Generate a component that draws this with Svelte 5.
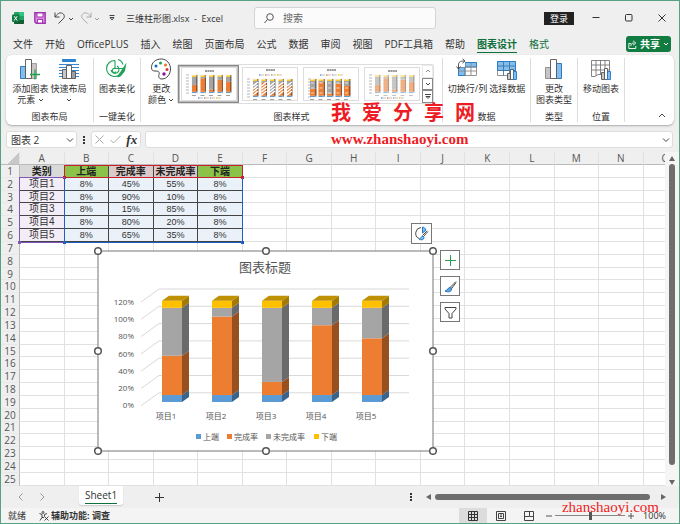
<script>
	const tabs = ['文件', '开始', 'OfficePLUS', '插入', '绘图', '页面布局', '公式', '数据', '审阅', '视图', 'PDF工具箱', '帮助', '图表设计', '格式'];
	const columns = 'ABCDEFGHIJKLMNO'.split('');
	const header = ['类别', '上端', '完成率', '未完成率', '下端'];
	const items = [
		{ name: '项目1', values: [8, 45, 55, 8] },
		{ name: '项目2', values: [8, 90, 10, 8] },
		{ name: '项目3', values: [8, 15, 85, 8] },
		{ name: '项目4', values: [8, 80, 20, 8] },
		{ name: '项目5', values: [8, 65, 35, 8] }
	];
	const rows = Array.from({ length: 25 }, (_, i) => i + 1);

	// front and side colour of every series
	const series = [
		{ front: '#5b9bd5', side: '#3a6489', x: 97 },
		{ front: '#ed7d31', side: '#98501f', x: 128 },
		{ front: '#a5a5a5', side: '#6a6a6a', x: 167 },
		{ front: '#ffc000', side: '#a47b00', x: 215 }
	];
	const handles = [[4, 4], [172, 4], [339, 4], [4, 104], [339, 104], [4, 204], [172, 204], [339, 204]];
	const styles = [
		{ title: 5, top: 8, legend: 31 },
		{ title: 4, top: 12, legend: 8, hatch: true },
		{ title: 4, top: 12, legend: 8, wide: true },
		{ title: 5, top: 8, legend: 31, pale: true }
	];

	let activeTab = '图表设计';
	let activeStyle = 0;
	let nameBox = '图表 2';
	let formula = '';
	let zoom = 50;

	function cell(row, col) {
		if (row === 1) return header[col] ?? '';
		const item = items[row - 2];
		if (!item || col > 4) return '';
		return col === 0 ? item.name : item.values[col - 1] + '%';
	}

	function stack(values, scale) {
		let sum = 0;
		return values.map((v, i) => {
			sum += v;
			return { ...series[i], h: v * scale, y: -sum * scale };
		});
	}
</script>

{#snippet chevron()}
	<svg class="chevron" viewBox="0 0 6 6" width="6" height="6"><path d="M1 2l2 2 2-2" /></svg>
{/snippet}

<div class="app">
	<header class="titlebar">
		<div class="quick">
			<svg width="12" height="12" viewBox="0 0 12 12">
				<rect x="2" width="10" height="12" rx="1" fill="#21a366" />
				<path d="M7 0h4a1 1 0 0 1 1 1v3H7z" fill="#33c481" />
				<path d="M2 8h10v3a1 1 0 0 1-1 1H3a1 1 0 0 1-1-1z" fill="#185c37" />
				<rect y="2.5" width="7.5" height="7.5" rx="1" fill="#107c41" />
				<path d="M2.2 4.2l3 4.2M5.2 4.2l-3 4.2" stroke="#fff" />
			</svg>
			<button class="save" aria-label="保存">
				<svg width="12" height="12" viewBox="0 0 12 12">
					<path d="M.8.8h10.4v10.4H2.2L.8 9.8z" fill="#d88be0" stroke="#a335b0" stroke-width="1.4" />
					<path d="M3 1h6v4H3zM3.5 7.5h5V11h-5z" fill="#fff" stroke="#a335b0" />
				</svg>
			</button>
			<button class="undo" aria-label="撤消">
				<svg width="12" height="12" viewBox="0 0 12 12" fill="none" stroke="#444">
					<path d="M1 .5v4.5h4.500M1 5C3.500 1.500 5.500.5 7.500 1c3 .8 3.600 4 1.800 5.800L4.500 11.500" />
				</svg>
			</button>
			<button class="more" aria-label="撤消列表">{@render chevron()}</button>
			<button class="redo" aria-label="恢复">
				<svg width="12" height="12" viewBox="0 0 12 12" fill="none" stroke="#aaa">
					<path d="M11 .5v4.500H6.500M11 5C8.500 1.500 6.500.5 4.500 1c-3 .8-3.600 4-1.800 5.800L7.500 11.500" />
				</svg>
			</button>
			<button class="more dim" aria-label="恢复列表">{@render chevron()}</button>
			<button class="custom" aria-label="自定义快速访问工具栏">
				<svg width="6" height="6" viewBox="0 0 6 6" fill="none" stroke="#444"><path d="M.5.5h5M1 2.500h4L3 5z" /></svg>
			</button>
			<h1>三维柱形图.xlsx&nbsp; -&nbsp; Excel</h1>
		</div>
		<label class="search">
			<svg width="10" height="11" viewBox="0 0 10 11" fill="none" stroke="#555">
				<circle cx="6" cy="4" r="3.300" /><path d="M3.600 6.400L.5 10" />
			</svg>
			<input type="text" placeholder="搜索" aria-label="搜索" />
		</label>
		<div class="window">
			<button class="login">登录</button>
			<button aria-label="最小化"><svg width="8" height="8" viewBox="0 0 8 8" stroke="#333"><path d="M.5 3.500h7" /></svg></button>
			<button aria-label="最大化"><svg width="8" height="8" viewBox="0 0 8 8" fill="none" stroke="#333"><rect x=".5" y=".5" width="6.500" height="6.500" rx="1" /></svg></button>
			<button aria-label="关闭"><svg width="8" height="8" viewBox="0 0 8 8" stroke="#333"><path d="M.5.5l7 7M7.500.5l-7 7" /></svg></button>
		</div>
	</header>

	<nav class="tabs">
		{#each tabs as tab}
			<button class:active={tab === activeTab} class:context={tab === '格式'} on:click={() => (activeTab = tab)}>{tab}</button>
		{/each}
		<button class="share">
			<svg width="9" height="9" viewBox="0 0 9 9" fill="none" stroke="#fff" stroke-width=".9">
				<path d="M3 3.500H.8v5h7V6M2.800 6c.2-2 1.200-3 3.200-3M5 .8L7.800 3 5 5.200" />
			</svg>
			共享 {@render chevron()}
		</button>
	</nav>

	<section class="ribbon">
		<div class="group layout">
			<div class="tools">
				<button>
					<svg width="22" height="22" viewBox="0 0 22 22" stroke="#555" stroke-width=".9">
						<path d="M1.500 8.500h5v12h-5z" fill="#83beec" stroke="#1e6fb8" />
						<path d="M12.500 5.500h5v15h-5z" fill="#c8c6c4" stroke="#999" />
						<path d="M6.500 1.500h6v19h-6z" fill="#fff" />
						<path d="M16 11.500v10M11 16.500h10" stroke="#22a04b" stroke-width="1.300" />
					</svg>
					<span>添加图表<br />元素 {@render chevron()}</span>
				</button>
				<button>
					<svg width="22" height="22" viewBox="0 0 22 22" stroke="#1e78c8" stroke-width=".9">
						<path d="M4.500 1.500h13v2h-13z" fill="#2b88d8" />
						<path d="M1 6.500h20M1 9.500h20M1 12.500h20M1 15.500h20M1 18.500h20" />
						<path d="M4.500 11.500h4v9h-4z" fill="#c8c6c4" stroke="#555" />
						<path d="M8.500 7.500h5v13h-5z" fill="#fff" stroke="#555" />
						<path d="M13.500 13.500h4v7h-4z" fill="#a19f9d" stroke="#555" />
					</svg>
					<span>快速布局<br />{@render chevron()}</span>
				</button>
			</div>
			<h2>图表布局</h2>
		</div>
		<div class="group narrow">
			<div class="tools">
				<button>
					<svg width="22" height="22" viewBox="0 0 22 22" fill="none" stroke="#1fa35a" stroke-width="1.100">
						<path d="M9 2.500a8 8 0 1 0 7.500 9M9 2.500v8h8M5 12a4 4 0 1 0 6-4M9 10.500a2 2 0 1 0 1 3M12 1.500a7 7 0 0 1 5 5" />
						<path d="M20.500 4.500L19 13l-3.500 4.500c-1.500 2-4 2-5 1 2.500-.5 2-3 3.500-4z" fill="#1fa35a" stroke="none" />
					</svg>
					<span>图表美化</span>
				</button>
			</div>
			<h2>一键美化</h2>
		</div>
		<div class="group wide">
			<div class="tools">
				<button class="colors">
					<svg width="22" height="22" viewBox="0 0 22 22">
						<path d="M11.500 1C5 1 1.500 5 1.500 9.500c0 3 1.500 3.500 3.500 3.500 3 0 5 .5 4 3.500-.8 2.500 0 4.500 3 4.500 5 0 8.500-5 8.500-10S17 1 11.500 1z" fill="#fff" stroke="#444" />
						<circle cx="6" cy="8" r="1.500" fill="#0f6cbd" /><circle cx="10.500" cy="5" r="1.500" fill="#16a34a" />
						<circle cx="15.500" cy="7" r="1.500" fill="#f2711c" /><circle cx="17" cy="11.500" r="1.500" fill="#d13438" />
						<circle cx="14" cy="16" r="1.700" fill="#881798" />
					</svg>
					<span>更改<br />颜色 {@render chevron()}</span>
				</button>
				<div class="gallery">
					{#each styles as s, n}
						<button class="thumb" class:picked={n === activeStyle} aria-label={'样式 ' + (n + 1)} on:click={() => (activeStyle = n)}>
							<svg width="56" height="34" viewBox="0 0 56 34">
								<rect x=".5" y=".5" width="55" height="33" fill="#fff" stroke="#ddd" />
								<path d="M24 {s.title - 1}h9" stroke="#777" stroke-dasharray="2 .4" stroke-width="1.500" />
								{#each [0, 1, 2, 3, 4, 5, 6] as g}
									<path d="M10 {s.top + g * 3}h39" stroke="#e4e4e4" stroke-width=".5" />
									<path d="M5 {s.top + g * 3}h3" stroke="#999" stroke-width=".7" />
								{/each}
								{#each items as item, i}
									<g transform="translate({s.wide ? 7 + i * 8.500 : 11 + i * 8.500} {s.top + 18})" opacity={s.pale ? 0.6 : 1}>
										{#each stack(item.values, 0.15) as b}
											<rect y={b.y} width={s.wide ? 5 : 4} height={b.h} fill={b.front} />
											<rect x={s.wide ? 5 : 4} y={b.y - 0.5} width="1.500" height={b.h} fill={b.side} />
										{/each}
										{#if s.hatch}
											<path d="M0-2l5-4M0-5l5-4M0-8l5-4M0-11l5-4" stroke="#fff" stroke-width="1.500" />
										{/if}
										{#if s.wide}
											<path d="M1-4h3M1-9h3M1-14h3" stroke="#fff" stroke-width=".7" />
										{/if}
										<path d="M0 2.500h4" stroke="#888" stroke-width=".8" />
									</g>
								{/each}
								{#each series as part, i}
									<path d="M{17 + i * 6} {s.legend}h1.500" stroke={part.front} stroke-width="1.500" />
									<path d="M{19 + i * 6} {s.legend}h3" stroke="#aaa" stroke-width=".7" />
								{/each}
							</svg>
						</button>
					{/each}
					<div class="pager">
						<button class="off" aria-label="上一行"><svg class="chevron" viewBox="0 0 6 6" width="6" height="6"><path d="M1 4l2-2 2 2" /></svg></button>
						<button aria-label="下一行">{@render chevron()}</button>
						<button aria-label="其他"><svg class="chevron" viewBox="0 0 6 6" width="6" height="6"><path d="M0 .5h6M1 2.500l2 2 2-2z" /></svg></button>
					</div>
				</div>
			</div>
			<h2>图表样式</h2>
		</div>
		<div class="group data">
			<div class="tools">
				<button>
					<svg width="22" height="22" viewBox="0 0 22 22" fill="none" stroke="#444" stroke-width=".9">
						<path d="M2.500 4.500h18v13h-18z" fill="#fff" stroke="#888" />
						<path d="M9 4.500h11.500v4.500H9zM2.500 9H9v8.500H2.500z" fill="#83beec" stroke="#1e78c8" />
						<path d="M9 4.500v13M15 4.500v13M2.500 9h18M2.500 13h18" stroke="#888" />
						<path d="M0 0h9v9H0z" fill="#fff" stroke="none" />
						<path d="M2.500 10.500V7c0-3 1.500-4 6-4M.5 8.500l2 2.500 2-2.500M6.500.8L9 3 6.500 5.200" />
					</svg>
					<span>切换行/列</span>
				</button>
				<button>
					<svg width="22" height="22" viewBox="0 0 22 22" stroke="#888" stroke-width=".9">
						<path d="M1.500 3.500h18v14h-18z" fill="#fff" />
						<path d="M1.500 3.500h18v9h-18z" fill="#83beec" stroke="#1e78c8" />
						<path d="M7.500 3.500v14M13.500 3.500v14M1.500 8h18M1.500 12.500h18" stroke="#3c77a8" />
						<path d="M11.500 15.500h3v6h-3z" fill="#c8c6c4" stroke="#555" />
						<path d="M14.500 11.500h3v10h-3z" fill="#fff" stroke="#555" />
						<path d="M17.500 13.500h3v8h-3z" fill="#83beec" stroke="#1e78c8" />
					</svg>
					<span>选择数据</span>
				</button>
			</div>
			<h2>数据</h2>
		</div>
		<div class="group narrow">
			<div class="tools">
				<button>
					<svg width="22" height="22" viewBox="0 0 22 22" stroke="#555" stroke-width=".9">
						<path d="M2.500 9.500h5v11h-5z" fill="#c8c6c4" stroke="#888" />
						<path d="M13.500 5.500h5v15h-5z" fill="#83beec" stroke="#1e6fb8" />
						<path d="M7.500 1.500h6v19h-6z" fill="#fff" />
					</svg>
					<span>更改<br />图表类型</span>
				</button>
			</div>
			<h2>类型</h2>
		</div>
		<div class="group narrow">
			<div class="tools">
				<button>
					<svg width="22" height="22" viewBox="0 0 22 22" stroke="#777" stroke-width=".9">
						<path d="M1.500 2.500h18v14H8L5 18.500H1.500z" fill="#fff" />
						<path d="M6 2.500v15M10.500 2.500v14M15 2.500v14M1.500 7h18M1.500 12h18" />
						<path d="M11.500 14.500h3v7h-3z" fill="#c8c6c4" stroke="#555" />
						<path d="M14.500 10.500h3v11h-3z" fill="#fff" stroke="#555" />
						<path d="M17.500 13.500h3v8h-3z" fill="#83beec" stroke="#1e78c8" />
					</svg>
					<span>移动图表</span>
				</button>
			</div>
			<h2>位置</h2>
		</div>
		<button class="collapse" aria-label="折叠功能区"><svg class="chevron" viewBox="0 0 8 6" width="8" height="6"><path d="M1 5l3-3 3 3" /></svg></button>
	</section>

	<div class="formula">
		<div class="box name">
			<input type="text" aria-label="名称框" bind:value={nameBox} />
			<button aria-label="名称列表"><svg class="chevron" viewBox="0 0 8 6" width="8" height="6"><path d="M1 1.500l3 3 3-3" /></svg></button>
		</div>
		<svg class="dots" width="2" height="8" viewBox="0 0 2 8" fill="#333"><path d="M0 0h2v2H0zM0 3h2v2H0zM0 6h2v2H0z" /></svg>
		<div class="box actions">
			<button aria-label="取消"><svg width="9" height="9" viewBox="0 0 9 9" stroke="#aaa"><path d="M.5.5l8 8M8.500.5l-8 8" /></svg></button>
			<button aria-label="输入"><svg width="11" height="9" viewBox="0 0 11 9" fill="none" stroke="#aaa"><path d="M.5 5l3 3L10.500 1" /></svg></button>
			<button class="fx">fx</button>
		</div>
		<div class="box entry">
			<input type="text" aria-label="编辑栏" bind:value={formula} />
			<button aria-label="展开编辑栏"><svg class="chevron" viewBox="0 0 8 6" width="8" height="6"><path d="M1 1.500l3 3 3-3" /></svg></button>
		</div>
	</div>

	<main class="sheet">
		<div class="cells">
			<table>
				<colgroup>
					<col class="gutter" />
					{#each columns as c}<col />{/each}
				</colgroup>
				<thead>
					<tr>
						<th class="corner" aria-label="全选"></th>
						{#each columns as c}<th>{c}</th>{/each}
					</tr>
				</thead>
				<tbody>
					{#each rows as r}
						<tr class:head={r === 1} class:filled={r > 1 && r < 7}>
							<th>{r}</th>
							{#each columns as c, i}<td class={i < 5 ? 'c' + i : ''}>{cell(r, i)}</td>{/each}
						</tr>
					{/each}
				</tbody>
			</table>

			<div class="range red"></div>
			<div class="range purple"></div>
			<div class="range blue"></div>

			<figure class="chart">
				<svg width="343" height="208" viewBox="0 0 343 208">
					<rect x="4" y="4" width="335" height="200" fill="#fff" stroke="#777" />
					<text class="title" x="171" y="25">图表标题</text>
					{#each [120, 100, 80, 60, 40, 20, 0] as tick, i}
						<path d="M47 {55 + i * 17.300}l18-13h250" fill="none" stroke="#d9d9d9" />
						<text class="tick" x="40" y={58 + i * 17.200}>{tick}%</text>
					{/each}
					{#each items as item, i}
						<g transform="translate({68 + i * 50} 155)">
							{#each stack(item.values, 0.872) as b}
								<rect y={b.y} width="20" height={b.h} fill={b.front} />
								<path d="M20 {b.y}l7-5v{b.h}l-7 5z" fill={b.side} />
							{/each}
							<path d="M0-101.200l7-5h20l-7 5z" fill="#bf9000" />
							<text class="item" x="4" y="17">{item.name}</text>
						</g>
					{/each}
					{#each series as s, i}
						<rect x={s.x + 5} y="187" width="5" height="5" fill={s.front} />
						<text x={s.x + 12} y="193">{header[i + 1]}</text>
					{/each}
					{#each handles as [x, y]}
						<circle cx={x} cy={y} r="3.300" fill="#fff" stroke="#555" stroke-width="1.500" />
					{/each}
				</svg>
			</figure>
			<button class="float format" aria-label="图表格式">
				<svg width="15" height="15" viewBox="0 0 15 15" fill="none" stroke="#444">
					<path d="M7 1.500a5.800 5.800 0 0 0-2 11" />
					<path d="M8.500 1v6l3.500-3C11 2 10 1.300 8.500 1z" fill="#83beec" stroke="#1e78c8" />
					<path d="M14 5.500L9.500 10.500M13 4.800L8.500 9.500" /><path d="M9 10c-2 0-1.500 2.500-4 3 2 1.500 5 1 5-1.500z" fill="#83beec" stroke="#1e78c8" />
				</svg>
			</button>
			<div class="side">
				<button class="float" aria-label="图表元素"><svg width="13" height="13" viewBox="0 0 13 13" stroke="#2f9e50"><path d="M6.500 1v11M1 6.500h11" /></svg></button>
				<button class="float" aria-label="图表样式">
					<svg width="13" height="13" viewBox="0 0 13 13" fill="none" stroke="#444">
						<path d="M12 1.500L6.500 7l1.200 1.500L12 2.500" /><path d="M6 7.500c-2.500 0-2 3-5 3.500 3 1.500 6.500 1 6.500-2z" fill="#5ba7e0" stroke="#1e6fb8" />
					</svg>
				</button>
				<button class="float" aria-label="图表筛选器"><svg width="13" height="13" viewBox="0 0 13 13" fill="none" stroke="#444"><path d="M1 1.500h11v1.500L8 7.500V12H5V7.500L1 3z" /></svg></button>
			</div>
		</div>
		<div class="vscroll">
			<svg width="6" height="5" viewBox="0 0 6 5"><path d="M0 5l3-5 3 5z" fill="#666" /></svg>
			<div class="bar"></div>
			<svg width="6" height="5" viewBox="0 0 6 5"><path d="M0 0l3 5 3-5z" fill="#666" /></svg>
		</div>
	</main>

	<div class="sheets">
		<button class="step" aria-label="上一张"><svg width="5" height="8" viewBox="0 0 5 8" fill="none" stroke="#999"><path d="M4.500.5L1 4l3.500 3.500" /></svg></button>
		<button class="step" aria-label="下一张"><svg width="5" height="8" viewBox="0 0 5 8" fill="none" stroke="#999"><path d="M.5.5L4 4 .5 7.500" /></svg></button>
		<button class="sheet-tab"><span>Sheet1</span></button>
		<button class="add" aria-label="新工作表"><svg width="9" height="9" viewBox="0 0 9 9" stroke="#333"><path d="M4.500 0v9M0 4.500h9" /></svg></button>
		<svg class="dots" width="2" height="8" viewBox="0 0 2 8" fill="#333"><path d="M0 0h2v2H0zM0 3h2v2H0zM0 6h2v2H0z" /></svg>
		<div class="hscroll">
			<svg width="5" height="6" viewBox="0 0 5 6"><path d="M5 0L0 3l5 3z" fill="#666" /></svg>
			<div class="bar"></div>
			<svg width="5" height="6" viewBox="0 0 5 6"><path d="M0 0l5 3-5 3z" fill="#666" /></svg>
		</div>
	</div>

	<footer>
		<span>就绪</span>
		<button class="access">
			<svg width="10" height="10" viewBox="0 0 10 10" fill="none" stroke="#333" stroke-width=".9">
				<circle cx="4" cy="1.500" r="1" /><path d="M.5 2.500l2.500 1v3L1 9.500M8 2.500L5.500 3.500v2M3 6.500h2M5.500 5.500l4 4M9.500 5.500l-4 4" />
			</svg>
			辅助功能: 调查
		</button>
		<div class="views">
			<button class="on" aria-label="普通"><svg width="10" height="10" viewBox="0 0 10 10" fill="none" stroke="#333"><path d="M.5.5h9v9h-9zM3.500.5v9M6.500.5v9M.5 3.500h9M.5 6.500h9" /></svg></button>
			<button aria-label="页面布局"><svg width="10" height="10" viewBox="0 0 10 10" fill="none" stroke="#444"><path d="M.5.5h9v9h-9zM2.500 2.500h5v5h-5zM4 4h2M4 5.500h2" /></svg></button>
			<button aria-label="分页预览"><svg width="10" height="10" viewBox="0 0 10 10" fill="none" stroke="#444"><path d="M.5.5h9v9h-9zM.5 5.500h5v-5M5.500 5.500h4" /></svg></button>
		</div>
		<button class="sign" aria-label="缩小"><svg width="6" height="6" viewBox="0 0 6 6" stroke="#555"><path d="M0 3h6" /></svg></button>
		<input class="zoom" type="range" aria-label="缩放" bind:value={zoom} />
		<button class="sign" aria-label="放大"><svg width="6" height="6" viewBox="0 0 6 6" stroke="#555"><path d="M0 3h6M3 0v6" /></svg></button>
		<span class="percent">100%</span>
	</footer>

	<div class="mark">
		<p><span>我</span><span>爱</span><span>分</span><span>享</span><span>网</span></p>
		<strong>www.zhanshaoyi.com</strong>
	</div>
	<div class="mark small">zhanshaoyi.com</div>
</div>

<style>
	:global(body) {
		margin: 0;
	}

	.app {
		position: relative;
		display: flex;
		flex-direction: column;
		box-sizing: border-box;
		height: 100vh;
		border: 1px solid #55a382;
		background: #efefef;
		color: #333;
		font-family: "Open Sans", "Noto Sans CJK SC", sans-serif;
		font-size: 9px;
		overflow: hidden;
	}

	button, input {
		font: inherit;
		color: inherit;
		background: none;
		border: 0;
		padding: 0;
		margin: 0;
		min-width: 0;
	}

	input:focus {
		outline: none;
	}

	svg {
		display: block;
	}

	.chevron {
		display: inline-block;
		fill: none;
		stroke: #444;
	}

	.titlebar {
		display: grid;
		grid-template-columns: 253fr 182fr 243fr;
		align-items: center;
		height: 34px;
		flex: none;
	}

	.quick {
		display: flex;
		align-items: center;
		padding-left: 11px;
	}

	.save {
		margin-left: 10px;
	}

	.undo {
		margin-left: 8px;
	}

	.more {
		margin-left: 2px;
	}

	.redo {
		margin-left: 6px;
	}

	.dim {
		opacity: 0.5;
	}

	.custom {
		margin-left: 9px;
	}

	h1 {
		margin: 0 0 0 11px;
		font-size: 9px;
		font-weight: 400;
		white-space: nowrap;
	}

	.search {
		display: flex;
		align-items: center;
		gap: 9px;
		height: 20px;
		padding-left: 9px;
		background: #fbfbfb;
		border: 1px solid #d4d4d4;
		border-radius: 3px;
	}

	.search input {
		flex: 1;
		font-size: 10px;
	}

	.search input::placeholder {
		color: #666;
	}

	.window {
		display: flex;
		justify-content: flex-end;
		align-items: center;
		gap: 25px;
		padding-right: 13px;
	}

	.login {
		width: 30px;
		height: 13px;
		margin-right: -7px;
		background: #222;
		color: #fff;
		line-height: 13px;
	}

	.login + button {
		margin-left: 0;
	}

	.tabs {
		display: flex;
		flex: none;
		gap: 12px;
		height: 20px;
		padding: 0 8px 0 12px;
		font-size: 10px;
	}

	.tabs button {
		height: 18px;
		line-height: 18px;
		white-space: nowrap;
	}

	.tabs .active {
		color: #0f703b;
		font-weight: 700;
		border-bottom: 1px solid #0f703b;
	}

	.tabs .context {
		color: #0f703b;
	}

	.tabs .share {
		display: flex;
		align-items: center;
		justify-content: center;
		gap: 3px;
		width: 45px;
		height: 16px;
		margin: 1px 0 0 auto;
		background: #107c41;
		border-radius: 3px;
		color: #fff;
		font-weight: 700;
	}

	.share .chevron {
		stroke: #fff;
	}

	.ribbon {
		display: flex;
		flex: none;
		height: 70px;
		margin: 0 5px;
		background: #fff;
		border-radius: 6px;
		box-shadow: 0 1px 2px #aaa;
	}

	.group {
		display: flex;
		flex-direction: column;
		justify-content: space-between;
		box-sizing: border-box;
		margin: 3px 0;
		border-right: 1px solid #ddd;
	}

	.layout, .data {
		width: 88px;
	}

	.narrow {
		width: 47px;
	}

	.wide {
		flex: 1;
	}

	.tools {
		display: flex;
		justify-content: center;
	}

	.tools > button {
		display: flex;
		flex-direction: column;
		align-items: center;
	}

	.layout .tools, .data .tools {
		gap: 2px;
	}

	.tools > button span {
		padding-top: 3px;
		line-height: 11px;
		white-space: nowrap;
	}

	h2 {
		margin: 0;
		font-size: 9px;
		font-weight: 400;
		line-height: 11px;
		text-align: center;
	}

	.gallery {
		display: flex;
		flex: 1;
		align-items: center;
		height: 40px;
		margin: 6px 8px 0 3px;
		box-sizing: border-box;
		border: 1px solid #ddd;
		border-radius: 2px;
	}

	.wide .tools {
		padding-left: 7px;
	}

	.thumb {
		display: flex;
		align-items: center;
		justify-content: center;
		flex: 1;
		align-self: stretch;
		border: 1px solid transparent;
	}

	.thumb.picked {
		border-color: #888;
		box-shadow: 0 0 0 1px #bbb inset;
	}

	.pager {
		display: grid;
		grid-template-rows: repeat(3, 1fr);
		align-self: stretch;
		width: 11px;
	}

	.pager button {
		display: flex;
		align-items: center;
		justify-content: center;
		border: 1px solid #888;
	}

	.pager .off {
		border-color: #ddd;
		opacity: 0.6;
	}

	.collapse {
		align-self: flex-end;
		width: 49px;
		padding: 0 8px 4px 0;
		text-align: right;
	}

	.formula {
		display: flex;
		flex: none;
		align-items: center;
		height: 17px;
		margin: 6px 6px 4px 5px;
	}

	.box {
		display: flex;
		align-items: center;
		box-sizing: border-box;
		height: 17px;
		background: #fff;
		border: 1px solid #ddd;
		border-radius: 3px;
	}

	.name {
		width: 71px;
		padding: 0 2px 0 4px;
	}

	.box input {
		flex: 1;
		font-size: 10px;
	}

	.dots {
		margin: 0 6px;
	}

	.actions {
		width: 50px;
		justify-content: space-around;
		margin-right: 4px;
	}

	.fx {
		font-family: "Liberation Serif", serif;
		font-size: 13px;
		font-style: italic;
		font-weight: 700;
		line-height: 13px;
	}

	.entry {
		flex: 1;
		padding: 0 2px;
	}

	.sheet {
		display: flex;
		flex: 1;
		min-height: 0;
	}

	.cells {
		position: relative;
		flex: 1;
		min-width: 0;
		overflow: hidden;
		background: #fff;
	}

	/* the last column runs on under the scroll bar */
	table {
		width: 103.5%;
		height: 100%;
		table-layout: fixed;
		border-collapse: separate;
		border-spacing: 0;
	}

	.gutter {
		width: 19px;
	}

	th, td {
		padding: 0;
		box-sizing: border-box;
		border-right: 1px solid #e1e1e1;
		border-bottom: 1px solid #e1e1e1;
		font-size: 10px;
		font-weight: 400;
		line-height: 10px;
		text-align: center;
		white-space: nowrap;
	}

	th {
		background: #efefef;
		color: #555;
	}

	thead th {
		height: 13px;
		border-bottom-color: #bbb;
	}

	tbody th {
		border-right-color: #bbb;
		border-bottom-color: #e8e8e8;
	}

	.corner {
		background: linear-gradient(135deg, #efefef 60%, #c8c8c8 60%);
	}

	.head .c0, .head .c1, .head .c2, .head .c3, .head .c4 {
		background: #dccaca;
		border-color: #444;
		color: #222;
		font-weight: 700;
	}

	.head .c0 {
		background: #d9d9d9;
	}

	.head .c1, .head .c4 {
		background: #8bc34a;
	}

	.filled .c0, .filled .c1, .filled .c2, .filled .c3, .filled .c4 {
		background: #eaf1f9;
		border-color: #444;
		font-family: "Liberation Sans", "Noto Sans CJK SC", sans-serif;
		font-size: 9px;
	}

	.filled .c0 {
		background: #f3edf8;
		font-size: 10px;
	}

	.range {
		position: absolute;
		box-sizing: border-box;
		border: 1px solid;
	}

	.range::before, .range::after {
		content: "";
		position: absolute;
		right: -2px;
		bottom: -2px;
		width: 3px;
		height: 3px;
		background: currentColor;
	}

	.range::before {
		right: auto;
		left: -2px;
	}

	.red {
		left: 63px;
		top: 13px;
		width: 179px;
		height: 13px;
		color: #c8202c;
	}

	.purple {
		left: 18px;
		top: 25px;
		width: 46px;
		height: 66px;
		color: #8455b8;
	}

	.blue {
		left: 63px;
		top: 26px;
		width: 179px;
		height: 65px;
		color: #1f5fc4;
		border-top: 0;
	}

	.chart {
		position: absolute;
		left: 93px;
		top: 95px;
		margin: 0;
	}

	.chart text {
		font-size: 8px;
		fill: #555;
	}

	.chart .title {
		font-size: 13px;
		text-anchor: middle;
	}

	.chart .tick {
		text-anchor: end;
	}

	.chart .item {
		text-anchor: middle;
	}

	.float {
		display: flex;
		align-items: center;
		justify-content: center;
		width: 20px;
		height: 20px;
		box-sizing: border-box;
		background: #fff;
		border: 1px solid #777;
	}

	.format {
		position: absolute;
		left: 410px;
		top: 71px;
		width: 21px;
		height: 21px;
	}

	.side {
		position: absolute;
		left: 439px;
		top: 98px;
		display: grid;
		gap: 6px;
	}

	.vscroll {
		display: flex;
		flex-direction: column;
		align-items: center;
		gap: 3px;
		width: 14px;
		padding: 4px 0 1px;
		box-sizing: border-box;
		background: #f5f5f5;
	}

	.vscroll .bar {
		flex: 1;
		width: 6px;
		margin-bottom: 12px;
		background: #6e6e6e;
		border-radius: 3px;
	}

	.sheets {
		display: flex;
		flex: none;
		align-items: center;
		height: 22px;
	}

	.step {
		margin-left: 17px;
	}

	.sheet-tab {
		align-self: flex-start;
		height: 19px;
		margin-left: 34px;
		padding: 0 6px;
		background: #fff;
		border-radius: 0 0 3px 3px;
		box-shadow: 0 1px 1px #ccc;
		font-size: 10px;
	}

	.sheet-tab span {
		display: block;
		line-height: 15px;
		border-bottom: 1px solid #0f703b;
	}

	.add {
		margin-left: 32px;
	}

	.sheets .dots {
		margin: 0 14px 0 auto;
	}

	.hscroll {
		display: flex;
		align-items: center;
		gap: 4px;
		width: 240px;
		margin-right: 13px;
	}

	.hscroll .bar {
		flex: 1;
		height: 6px;
		margin-right: 7px;
		background: #6e6e6e;
		border-radius: 3px;
	}

	footer {
		display: flex;
		flex: none;
		align-items: center;
		height: 15px;
		padding: 0 13px 0 7px;
		background: #f4f4f4;
		line-height: 15px;
	}

	.access {
		display: flex;
		align-items: center;
		gap: 2px;
		margin-left: 13px;
		font-weight: 700;
	}

	.views {
		display: flex;
		margin-left: auto;
	}

	.views button {
		display: flex;
		align-items: center;
		justify-content: center;
		width: 28px;
		height: 15px;
	}

	.views .on {
		background: #dcdcdc;
	}

	.sign {
		margin: 0 3px;
	}

	.zoom {
		appearance: none;
		width: 70px;
		height: 9px;
		background: linear-gradient(#888, #888) center / 100% 1px no-repeat;
	}

	.zoom::-webkit-slider-thumb {
		appearance: none;
		width: 3px;
		height: 8px;
		background: #555;
	}

	.percent {
		margin-left: 6px;
	}

	.mark {
		position: absolute;
		left: 330px;
		top: 100px;
		color: #ed1c24;
		pointer-events: none;
	}

	.mark p {
		display: flex;
		gap: 11px;
		margin: 0;
		font-size: 20px;
		font-weight: 700;
		line-height: 24px;
	}

	.mark strong {
		display: block;
		padding-top: 5px;
		font-family: "Liberation Serif", serif;
		font-size: 15px;
		line-height: 18px;
	}

	.small {
		left: auto;
		right: 20px;
		top: auto;
		bottom: 8px;
		font-family: "Liberation Serif", serif;
		font-size: 15px;
		line-height: 16px;
	}
</style>
